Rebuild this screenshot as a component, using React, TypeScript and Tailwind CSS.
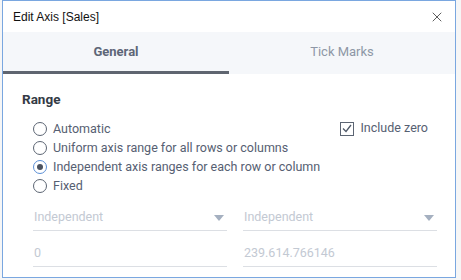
import { X } from "lucide-react";

function Radio({ label, checked }: { label: string; checked?: boolean }) {
  return (
    <div className="flex h-[19px] items-center">
      <span
        className={
          "flex size-[14px] shrink-0 items-center justify-center rounded-full border bg-white " +
          (checked ? "border-[#5b8fd6]" : "border-[#5c6573]")
        }
      >
        {checked && <span className="size-[6px] rounded-full bg-[#4a5260]" />}
      </span>
      <span className="ml-[6px] whitespace-nowrap text-[12.5px] leading-[19px] text-[#566072]">
        {label}
      </span>
    </div>
  );
}

function Field({ value, arrow }: { value: string; arrow?: boolean }) {
  return (
    <div className="flex h-[26px] items-center justify-between border-b border-[#dcdfe4] pl-[1px] pr-[3px]">
      <span className="text-[12.5px] text-[#c3c9d3]">{value}</span>
      {arrow && (
        <svg width="10" height="6" viewBox="0 0 10 6">
          <path d="M0 0h10L5 6z" fill="#a5b0c0" />
        </svg>
      )}
    </div>
  );
}

export default function App() {
  return (
    <div
      className="h-[280px] w-[461px] bg-[#f6f6f6]"
      style={{ fontFamily: "Roboto, 'Liberation Sans', sans-serif" }}
    >
      <div className="ml-[2px] flex h-[278px] w-[454px] flex-col border border-[#7aa7e0] bg-white">
        {/* title bar */}
        <div className="flex h-[31px] shrink-0 items-center justify-between pl-[10px] pr-[10px]">
          <span
            className="text-[12px] text-[#111]"
            style={{ fontFamily: "'Liberation Sans', Arial, sans-serif" }}
          >
            Edit Axis [Sales]
          </span>
          <X className="size-[16px] text-[#222]" strokeWidth={1.1} />
        </div>

        {/* tabs */}
        <div className="flex h-[42px] shrink-0 bg-[#f5f7fa]">
          <div className="flex w-[226px] flex-col">
            <div className="flex flex-1 items-center justify-center text-[13px] font-bold text-[#5d6677]">
              General
            </div>
            <div className="h-[3px] bg-[#5f6570]" />
          </div>
          <div className="flex flex-1 items-center justify-center pb-[3px] text-[13px] text-[#8e97a6]">
            Tick Marks
          </div>
        </div>

        {/* body */}
        <div className="flex flex-col pl-[19px] pr-[18px]">
          <div className="mt-[16px] h-[19px] text-[13.5px] font-bold leading-[19px] text-[#333a45]">
            Range
          </div>
          <div className="mt-[10px] flex pl-[11px]">
            <div className="flex flex-1 flex-col">
              <Radio label="Automatic" />
              <Radio label="Uniform axis range for all rows or columns" />
              <Radio label="Independent axis ranges for each row or column" checked />
              <Radio label="Fixed" />
            </div>
            <div className="flex h-[19px] items-center pr-[9px]">
              <span className="flex size-[14px] items-center justify-center border border-[#5c6573] bg-white">
                <svg width="10" height="9" viewBox="0 0 10 9">
                  <path d="M1 4.5l3 3L9 1" fill="none" stroke="#4f5968" strokeWidth="1.3" />
                </svg>
              </span>
              <span className="ml-[6px] whitespace-nowrap text-[12.5px] text-[#566072]">
                Include zero
              </span>
            </div>
          </div>

          <div className="mt-[10px] grid grid-cols-2 gap-x-[16px] pl-[11px]">
            <Field value="Independent" arrow />
            <Field value="Independent" arrow />
            <div className="mt-[10px]">
              <Field value="0" />
            </div>
            <div className="mt-[10px]">
              <Field value="239.614.766146" />
            </div>
          </div>
        </div>
      </div>
    </div>
  );
}
